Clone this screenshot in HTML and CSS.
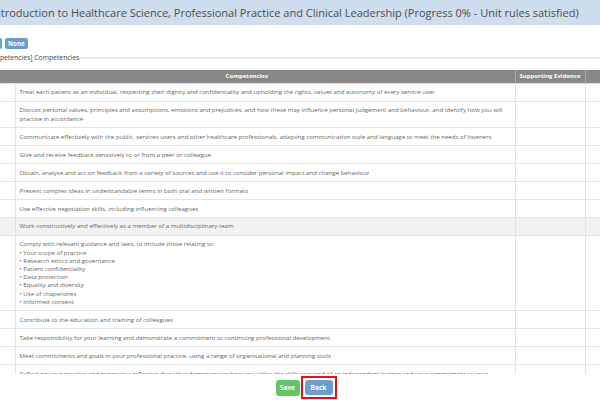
FILE: index.html
```html
<!DOCTYPE html>
<html>
<head>
<meta charset="utf-8">
<link rel="stylesheet" href="styles.css">
</head>
<body>
<div class="page">
  <div class="title-bar">Introduction to Healthcare Science, Professional Practice and Clinical Leadership (Progress 0% - Unit rules satisfied)</div>
  <div class="filters">
    <span class="btn btn-blue">All</span>
    <span class="btn btn-blue">None</span>
  </div>
  <div class="legend"><span class="legend-text">[Competencies] Competencies</span><span class="legend-line"></span></div>
  <div class="table-wrap">
    <table class="grid">
      <colgroup>
        <col class="c-code"><col class="c-comp"><col class="c-evid"><col class="c-act">
      </colgroup>
      <thead>
        <tr><th colspan="2">Competencies</th><th>Supporting Evidence</th><th></th></tr>
      </thead>
      <tbody>
        <tr><td class="code">1.1.1</td><td>Treat each patient as an individual, respecting their dignity and confidentiality and upholding the rights, values and autonomy of every service user</td><td></td><td></td></tr>
        <tr><td class="code">1.1.2</td><td>Discuss personal values, principles and assumptions, emotions and prejudices, and how these may influence personal judgement and behaviour, and identify how you will practise in accordance</td><td></td><td></td></tr>
        <tr><td class="code">1.1.3</td><td>Communicate effectively with the public, services users and other healthcare professionals, adapting communication style and language to meet the needs of listeners</td><td></td><td></td></tr>
        <tr><td class="code">1.1.4</td><td>Give and receive feedback sensitively to or from a peer or colleague</td><td></td><td></td></tr>
        <tr><td class="code">1.1.5</td><td>Obtain, analyse and act on feedback from a variety of sources and use it to consider personal impact and change behaviour</td><td></td><td></td></tr>
        <tr><td class="code">1.1.6</td><td>Present complex ideas in understandable terms in both oral and written formats</td><td></td><td></td></tr>
        <tr><td class="code">1.1.7</td><td>Use effective negotiation skills, including influencing colleagues</td><td></td><td></td></tr>
        <tr class="hover"><td class="code">1.1.8</td><td>Work constructively and effectively as a member of a multidisciplinary team</td><td></td><td></td></tr>
        <tr><td class="code">1.1.9</td><td>Comply with relevant guidance and laws, to include those relating to:<br>• Your scope of practice<br>• Research ethics and governance<br>• Patient confidentiality<br>• Data protection<br>• Equality and diversity<br>• Use of chaperones<br>• Informed consent</td><td></td><td></td></tr>
        <tr><td class="code">1.1.10</td><td>Contribute to the education and training of colleagues</td><td></td><td></td></tr>
        <tr><td class="code">1.1.11</td><td>Take responsibility for your learning and demonstrate a commitment to continuing professional development</td><td></td><td></td></tr>
        <tr><td class="code">1.1.12</td><td>Meet commitments and goals in your professional practice, using a range of organisational and planning tools</td><td></td><td></td></tr>
        <tr><td class="code">1.1.13</td><td>Reflect on your practice and generate a reflective diary that demonstrates how you utilise the skills required of an independent learner and your commitment to your continuing professional development</td><td></td><td></td></tr>
      </tbody>
    </table>
  </div>
  <div class="actions">
    <span class="btn btn-save">Save</span>
    <span class="focus-box"><span class="btn btn-back">Back</span></span>
  </div>
</div>
</body>
</html>
```

FILE: styles.css
```css
html, body {
  margin: 0;
  padding: 0;
  background: #ffffff;
  overflow: hidden;
  width: 600px;
  height: 400px;
}

body {
  font-family: "Open Sans", "Liberation Sans", sans-serif;
  color: #555555;
}

.page {
  margin-left: -21px;
  width: 642px;
}

.title-bar {
  height: 25px;
  line-height: 26px;
  background: #cfdeee;
  font-size: 11px;
  color: #4d4d4d;
  padding-left: 12px;
  white-space: nowrap;
}

.filters {
  display: flex;
  gap: 3px;
  margin-top: 13px;
  padding-left: 9px;
  height: 11px;
}

.btn {
  display: inline-flex;
  align-items: center;
  justify-content: center;
  color: #ffffff;
  font-weight: 700;
  border-radius: 2px;
  white-space: nowrap;
}

.filters .btn {
  font-size: 6.2px;
  height: 11px;
  padding: 0 3px;
}

.btn-blue {
  background: #6b9dd3;
}

.legend {
  display: flex;
  align-items: center;
  margin-top: 3px;
  padding-left: 4px;
  height: 10px;
}

.legend-text {
  font-size: 6.8px;
  color: #444444;
  white-space: nowrap;
}

.legend-line {
  flex: 1;
  height: 2px;
  background: #ebebeb;
  margin-top: 2px;
}

.table-wrap {
  margin-top: 8px;
  height: 304px;
  overflow: hidden;
  width: 642px;
}

.grid {
  border-collapse: collapse;
  table-layout: fixed;
  width: 700px;
  font-size: 6.1px;
  line-height: 8.2px;
}

.c-code { width: 36px; }
.c-comp { width: 500px; }
.c-evid { width: 70px; }
.c-act { width: 94px; }

.grid th {
  background: #888888;
  color: #ffffff;
  font-weight: 700;
  height: 13px;
  padding: 0 2px;
  border-left: 1px solid #a8a8a8;
  text-align: center;
  font-size: 6px;
  line-height: 13px;
  white-space: nowrap;
}

.grid th:first-child {
  border-left: none;
}

.grid td {
  border: 1px solid #e2e2ea;
  padding: 4.4px 4px;
  color: #666666;
  vertical-align: middle;
  text-align: left;
}

.grid td.code {
  color: #5a87c0;
  white-space: nowrap;
  border-left: none;
}

.grid tr.hover td {
  background: #f2f2f2;
}

.actions {
  display: flex;
  justify-content: center;
  gap: 1px;
  padding-left: 12px;
  margin-top: 2px;
  align-items: center;
  height: 23px;
}

.actions .btn {
  font-size: 6.6px;
  height: 16px;
  border-radius: 3px;
}

.btn-save {
  background: #62c462;
  width: 24px;
}

.focus-box {
  display: inline-flex;
  border: 2px solid #e2121a;
  padding: 2px;
}

.actions .btn-back {
  background: #6c9fd1;
  width: 28px;
  height: 15px;
}
```
